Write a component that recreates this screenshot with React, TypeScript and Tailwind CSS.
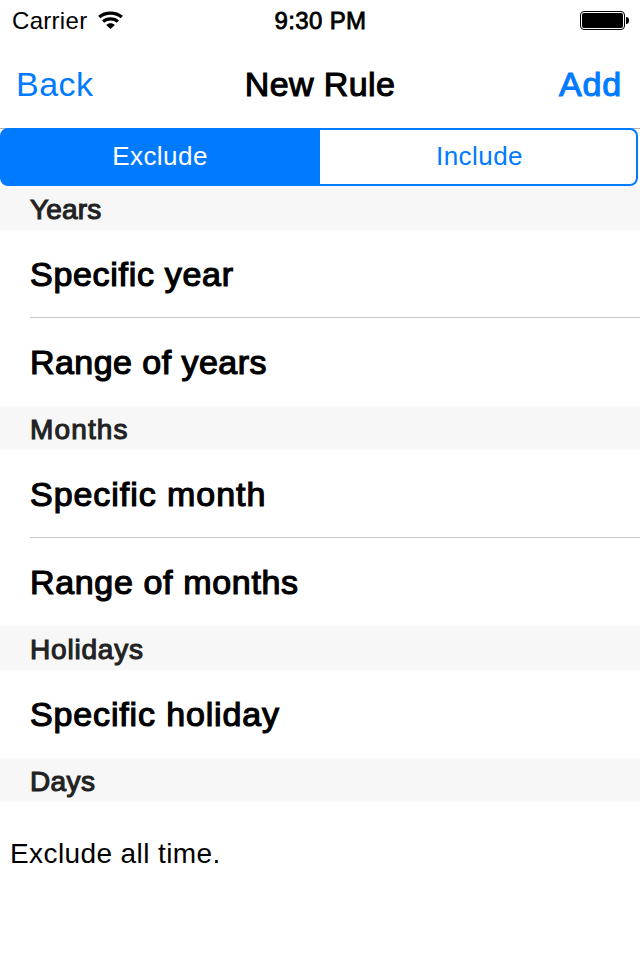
import React from "react";

type Section = { title: string; tracking: string; rows: { label: string; tracking: string }[] };

const sections: Section[] = [
  {
    title: "Years",
    tracking: "tracking-[0.2px]",
    rows: [
      { label: "Specific year", tracking: "tracking-[0.7px]" },
      { label: "Range of years", tracking: "tracking-[0.45px]" },
    ],
  },
  {
    title: "Months",
    tracking: "tracking-[1.15px]",
    rows: [
      { label: "Specific month", tracking: "tracking-[0.95px]" },
      { label: "Range of months", tracking: "tracking-[0.65px]" },
    ],
  },
  {
    title: "Holidays",
    tracking: "tracking-[0.8px]",
    rows: [{ label: "Specific holiday", tracking: "tracking-[0.85px]" }],
  },
  { title: "Days", tracking: "tracking-[0.4px]", rows: [] },
];

function StatusBar() {
  return (
    <div className="grid h-10 grid-cols-3 items-center pl-3 pr-[11px]">
      <div className="flex items-center gap-[11px]">
        <span className="relative top-px text-2xl leading-10 tracking-[0.3px]">Carrier</span>
        <svg width="25" height="18" viewBox="0 0 25 18">
          <g fill="none" stroke="#000">
            <path d="M1.2 6C7.4.7 17.6.7 23.8 6" strokeWidth="3.3" />
            <path d="M5.1 10.6c4.1-3.7 10.7-3.7 14.8 0" strokeWidth="3.1" />
          </g>
          <path d="M8.2 14c2.3-2.4 6.3-2.4 8.6 0L12.5 18z" />
        </svg>
      </div>
      <span className="relative top-px whitespace-nowrap text-center text-2xl leading-10 tracking-[0.35px] [-webkit-text-stroke:0.8px_#000]">
        9:30 PM
      </span>
      <div className="flex items-center justify-end gap-px">
        <div className="h-[19px] w-[45px] rounded-[4px] border border-black p-px">
          <div className="h-full w-full rounded-[2px] bg-black" />
        </div>
        <div className="h-[7px] w-[3px] rounded-r-full bg-black" />
      </div>
    </div>
  );
}

function NavBar() {
  return (
    <div className="grid h-[88px] grid-cols-3 items-center pl-4 pr-[18px] text-[34px] leading-[88px]">
      <span className="tracking-[0.5px] text-[#007aff]">Back</span>
      <span className="whitespace-nowrap pl-[2px] text-center tracking-[0.4px] [-webkit-text-stroke:1.1px_#000]">New Rule</span>
      <span className="text-right tracking-[0.8px] text-[#007aff] [-webkit-text-stroke:1.1px_#007aff]">Add</span>
    </div>
  );
}

function SegmentedControl() {
  return (
    <div className="h-[58px] bg-[linear-gradient(#b2b2b2_1px,#fff_1px)]">
      <div className="flex h-full w-[638px] overflow-hidden rounded-[8px] border-2 border-[#007aff] bg-[linear-gradient(90deg,#007aff_318px,#fff_318px)] text-center text-[26px] leading-[53px] tracking-[0.45px]">
        <span className="w-[318px] pr-[2px] text-white">Exclude</span>
        <span className="flex-1 pl-[3px] text-[#007aff]">Include</span>
      </div>
    </div>
  );
}

export default function App() {
  return (
    <div className="flex h-[960px] w-[640px] flex-col overflow-hidden bg-white font-['Liberation_Sans',Arial,sans-serif] text-black">
      <StatusBar />
      <NavBar />
      <SegmentedControl />
      {sections.map((section) => (
        <section key={section.title}>
          <h2
            className={`h-11 bg-[#f7f7f7] pl-[30px] text-[28px] leading-[48px] text-[#222] [-webkit-text-stroke:1.1px_#222] ${section.tracking}`}
          >
            {section.title}
          </h2>
          <div className="flex flex-col pl-[30px]">
            {section.rows.map((row, i) => (
              <div
                key={row.label}
                className={`h-[88px] text-[34px] leading-[88px] [-webkit-text-stroke:1.2px_#000] ${row.tracking} ${
                  i < section.rows.length - 1 ? "border-b border-[#c8c7cc]" : ""
                }`}
              >
                {row.label}
              </div>
            ))}
          </div>
        </section>
      ))}
      <p className="pl-2.5 pt-8 text-[28px] leading-10 tracking-[0.4px]">Exclude all time.</p>
    </div>
  );
}
